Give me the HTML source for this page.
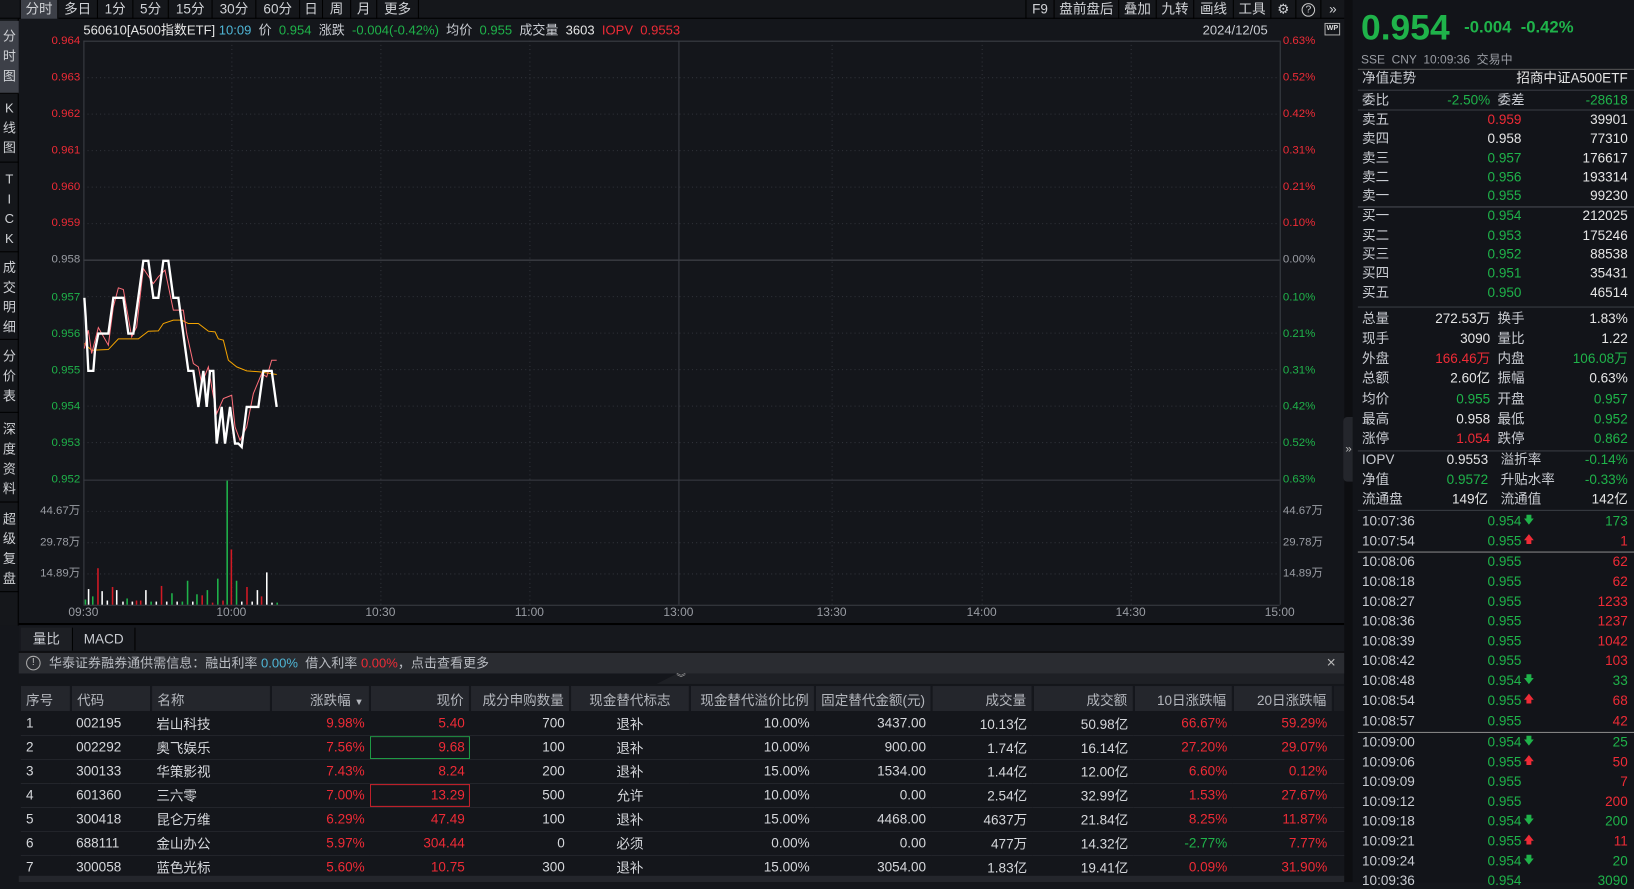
<!DOCTYPE html>
<html><head><meta charset="utf-8">
<style>
*{margin:0;padding:0;box-sizing:border-box}
html,body{width:1634px;height:882px;overflow:hidden;background:#14161b}
body{font-family:"Liberation Sans","Noto Sans CJK SC",sans-serif;color:#c9ccd2;font-size:13px}
#w{position:absolute;left:0;top:0;width:1568px;height:846px;transform:scale(1.0421,1.0426);transform-origin:0 0;background:#14161b}
.a{position:absolute;white-space:nowrap;line-height:16px}
.g{color:#1fb34a}.r{color:#ee2b36}.wh{color:#e6e6e6}.gy{color:#9a9da4}.cy{color:#4fb6d6}
.tb{position:absolute;top:0;height:18px;line-height:18px;text-align:center;font-size:13px;color:#d0d2d6;border-right:1px solid #000}
.vt{position:absolute;left:0;width:18px;text-align:center;font-size:12.5px;line-height:19px;color:#cfd1d5;border-bottom:1px solid #000}
.pl{position:absolute;right:1491px;font-size:11px;line-height:12px}
.pr{position:absolute;left:1231px;font-size:11px;line-height:12px}
.tx{position:absolute;top:582px;font-size:11.5px;color:#9a9da4;transform:translateX(-50%)}
#rp{position:absolute;left:1298px;top:0;width:270px;height:846px;background:#121419}
#rp .a{font-size:13px}
.hl{position:absolute;left:5px;right:0;height:1px;background:#3a3d44}
table{position:absolute;left:20px;top:658px;border-collapse:collapse;table-layout:fixed;font-size:13px}
td,th{height:23px;white-space:nowrap;overflow:hidden;padding:0 5px;text-align:right;font-weight:normal}
th{background:#24262c;color:#b4b7bd;border-right:2px solid #15171c;height:24px}
td{border-bottom:1px solid #23252b;color:#d5d7db}
.L{text-align:left}.C{text-align:center}
</style></head><body><div id="w">

<!-- top toolbar -->
<div style="position:absolute;left:0;top:0;width:1290px;height:18px;background:#15171b;border-bottom:1px solid #000"></div>
<div class="tb" style="left:0;width:20px"></div>
<div class="tb" style="left:20px;width:36px;background:#3d4048">分时</div>
<div class="tb" style="left:56px;width:38px">多日</div>
<div class="tb" style="left:94px;width:34px">1分</div>
<div class="tb" style="left:128px;width:34px">5分</div>
<div class="tb" style="left:162px;width:42px">15分</div>
<div class="tb" style="left:204px;width:42px">30分</div>
<div class="tb" style="left:246px;width:42px">60分</div>
<div class="tb" style="left:288px;width:22px">日</div>
<div class="tb" style="left:310px;width:27px">周</div>
<div class="tb" style="left:337px;width:25px">月</div>
<div class="tb" style="left:362px;width:40px">更多</div>
<div class="tb" style="left:984px;width:28px;border-left:1px solid #000">F9</div>
<div class="tb" style="left:1012px;width:62px">盘前盘后</div>
<div class="tb" style="left:1074px;width:36px">叠加</div>
<div class="tb" style="left:1110px;width:36px">九转</div>
<div class="tb" style="left:1146px;width:38px">画线</div>
<div class="tb" style="left:1184px;width:36px">工具</div>
<div class="tb" style="left:1220px;width:24px">⚙</div>
<div class="tb" style="left:1244px;width:24px"><span style="display:inline-block;width:13px;height:13px;border:1px solid #ccc;border-radius:50%;font-size:10px;line-height:11px;vertical-align:middle">?</span></div>
<div class="tb" style="left:1268px;width:22px;border-right:0">»</div>

<!-- left vertical tabs -->
<div style="position:absolute;left:0;top:18px;width:18px;height:582px;background:#15171b;border-right:1px solid #000"></div>
<div class="vt" style="top:20px;height:70px;background:#3d4048;padding-top:6px">分<br>时<br>图</div>
<div class="vt" style="top:90px;height:66px;padding-top:5px">K<br>线<br>图</div>
<div class="vt" style="top:156px;height:86px;padding-top:7px">T<br>I<br>C<br>K</div>
<div class="vt" style="top:242px;height:84px;padding-top:6px">成<br>交<br>明<br>细</div>
<div class="vt" style="top:326px;height:70px;padding-top:7px">分<br>价<br>表</div>
<div class="vt" style="top:396px;height:86px;padding-top:7px">深<br>度<br>资<br>料</div>
<div class="vt" style="top:482px;height:86px;padding-top:7px">超<br>级<br>复<br>盘</div>

<!-- info line -->
<div class="a" style="left:80px;top:21px;font-size:12.5px"><span class="wh">560610[A500指数ETF]</span> <span class="cy">10:09</span> &nbsp;价 &nbsp;<span class="g">0.954</span> &nbsp;涨跌 &nbsp;<span class="g">-0.004(-0.42%)</span> &nbsp;均价 &nbsp;<span class="g">0.955</span> &nbsp;成交量 &nbsp;<span class="wh">3603</span> &nbsp;<span class="r">IOPV &nbsp;0.9553</span></div>
<div class="a" style="left:1154px;top:21px;font-size:12.5px">2024/12/05</div>
<div style="position:absolute;left:1271px;top:22px;width:15px;height:12px;border:1px solid #aaa;font-size:7px;line-height:10px;text-align:center;color:#ddd;font-weight:bold">WP</div>

<!-- chart svg -->
<svg style="position:absolute;left:0;top:0" width="1290" height="600">
<g stroke="#30333a" stroke-dasharray="1,3" stroke-width="1">
<line x1="80" x2="1228" y1="74.5" y2="74.5"/><line x1="80" x2="1228" y1="109.5" y2="109.5"/><line x1="80" x2="1228" y1="144.5" y2="144.5"/><line x1="80" x2="1228" y1="179.5" y2="179.5"/><line x1="80" x2="1228" y1="214.5" y2="214.5"/>
<line x1="80" x2="1228" y1="284.5" y2="284.5"/><line x1="80" x2="1228" y1="319.5" y2="319.5"/><line x1="80" x2="1228" y1="354.5" y2="354.5"/><line x1="80" x2="1228" y1="389.5" y2="389.5"/><line x1="80" x2="1228" y1="424.5" y2="424.5"/>
<line x1="80" x2="1228" y1="490.5" y2="490.5"/><line x1="80" x2="1228" y1="520.5" y2="520.5"/><line x1="80" x2="1228" y1="550.5" y2="550.5"/>
<line x1="222.5" x2="222.5" y1="39" y2="580"/><line x1="365.5" x2="365.5" y1="39" y2="580"/><line x1="508.5" x2="508.5" y1="39" y2="580"/><line x1="798.5" x2="798.5" y1="39" y2="580"/><line x1="942.5" x2="942.5" y1="39" y2="580"/><line x1="1085.5" x2="1085.5" y1="39" y2="580"/>
</g>
<g stroke="#3b3e45" stroke-width="1" fill="none">
<line x1="80" x2="1228" y1="39.5" y2="39.5"/><line x1="80" x2="1228" y1="249.5" y2="249.5" stroke="#4a4d54"/><line x1="80" x2="1228" y1="460.5" y2="460.5"/><line x1="80" x2="1228" y1="580.5" y2="580.5"/>
<line x1="80.5" x2="80.5" y1="39" y2="580"/><line x1="651.5" x2="651.5" y1="39" y2="580"/><line x1="1228.5" x2="1228.5" y1="39" y2="580"/>
<line x1="18" x2="1290" y1="598.5" y2="598.5" stroke="#000" stroke-width="2"/>
</g>
<g stroke-width="1.5">
<line x1="82" x2="82" y1="580" y2="575" stroke="#1fb34a"/><line x1="85" x2="85" y1="580" y2="565" stroke="#fff"/><line x1="89" x2="89" y1="580" y2="572" stroke="#1fb34a"/><line x1="94" x2="94" y1="580" y2="545" stroke="#d21a24"/><line x1="98" x2="98" y1="580" y2="567" stroke="#fff"/><line x1="103" x2="103" y1="580" y2="576" stroke="#fff"/><line x1="108" x2="108" y1="580" y2="563" stroke="#d21a24"/><line x1="112" x2="112" y1="580" y2="566" stroke="#fff"/><line x1="118" x2="118" y1="580" y2="577" stroke="#fff"/><line x1="122" x2="122" y1="580" y2="574" stroke="#1fb34a"/><line x1="127" x2="127" y1="580" y2="577" stroke="#fff"/><line x1="131" x2="131" y1="580" y2="576" stroke="#d21a24"/><line x1="135" x2="135" y1="580" y2="576" stroke="#d21a24"/><line x1="140" x2="140" y1="580" y2="566" stroke="#fff"/><line x1="145" x2="145" y1="580" y2="577" stroke="#1fb34a"/><line x1="150" x2="150" y1="580" y2="577" stroke="#fff"/><line x1="155" x2="155" y1="580" y2="562" stroke="#d21a24"/><line x1="160" x2="160" y1="580" y2="577" stroke="#fff"/><line x1="165" x2="165" y1="580" y2="569" stroke="#1fb34a"/><line x1="170" x2="170" y1="580" y2="577" stroke="#fff"/><line x1="175" x2="175" y1="580" y2="577" stroke="#1fb34a"/><line x1="180" x2="180" y1="580" y2="557" stroke="#1fb34a"/><line x1="185" x2="185" y1="580" y2="577" stroke="#fff"/><line x1="189" x2="189" y1="580" y2="570" stroke="#1fb34a"/><line x1="194" x2="194" y1="580" y2="571" stroke="#d21a24"/><line x1="199" x2="199" y1="580" y2="566" stroke="#1fb34a"/><line x1="204" x2="204" y1="580" y2="578" stroke="#d21a24"/><line x1="209" x2="209" y1="580" y2="555" stroke="#1fb34a"/><line x1="214" x2="214" y1="580" y2="576" stroke="#d21a24"/><line x1="218" x2="218" y1="580" y2="461" stroke="#1fb34a"/><line x1="222" x2="222" y1="580" y2="527" stroke="#d21a24"/><line x1="227" x2="227" y1="580" y2="557" stroke="#1fb34a"/><line x1="232" x2="232" y1="580" y2="577" stroke="#fff"/><line x1="237" x2="237" y1="580" y2="563" stroke="#d21a24"/><line x1="242" x2="242" y1="580" y2="577" stroke="#fff"/><line x1="247" x2="247" y1="580" y2="566" stroke="#fff"/><line x1="251" x2="251" y1="580" y2="572" stroke="#d21a24"/><line x1="256" x2="256" y1="580" y2="549" stroke="#fff"/><line x1="261" x2="261" y1="580" y2="578" stroke="#fff"/><line x1="266" x2="266" y1="580" y2="578" stroke="#1fb34a"/>
</g>
<g transform="scale(0.9597) translate(70,240) scale(0.33333)" fill="none" stroke-linejoin="miter">
<polyline stroke="#f5a400" stroke-width="3" points="43,310 65,330 115,328 145,296 205,296 235,273 265,272 280,250 310,240 335,240 355,250 385,250 415,273 435,275 445,296 460,300 475,360 500,380 530,392 570,395 620,403"/>
<polyline stroke="#ff6f7a" stroke-width="3" points="43,325 55,270 65,340 85,262 115,315 130,200 145,143 160,148 185,290 200,260 220,85 250,130 265,110 285,90 310,210 340,210 350,280 370,370 385,380 395,430 415,380 425,440 440,520 460,475 485,465 495,560 510,600 530,560 550,460 575,400 590,410 605,360 620,360"/>
<polyline stroke="#ffffff" stroke-width="7" points="43,173 47,230 55,392 70,392 75,330 85,280 115,280 130,173 160,173 175,280 190,280 220,62 235,62 250,173 265,173 280,62 295,62 310,173 325,173 355,392 370,392 385,500 400,392 410,500 420,392 430,392 440,610 455,500 465,610 480,500 495,610 505,610 515,620 530,500 565,500 580,392 605,392 620,500"/>
</g>
</svg>

<!-- left price labels -->
<div class="pl r" style="top:33px">0.964</div><div class="pl r" style="top:68px">0.963</div><div class="pl r" style="top:103px">0.962</div><div class="pl r" style="top:138px">0.961</div><div class="pl r" style="top:173px">0.960</div><div class="pl r" style="top:208px">0.959</div>
<div class="pl gy" style="top:243px">0.958</div>
<div class="pl g" style="top:279px">0.957</div><div class="pl g" style="top:314px">0.956</div><div class="pl g" style="top:349px">0.955</div><div class="pl g" style="top:384px">0.954</div><div class="pl g" style="top:419px">0.953</div><div class="pl g" style="top:454px">0.952</div>
<div class="pl gy" style="top:484px">44.67万</div><div class="pl gy" style="top:514px">29.78万</div><div class="pl gy" style="top:544px">14.89万</div>
<!-- right pct labels -->
<div class="pr r" style="top:33px">0.63%</div><div class="pr r" style="top:68px">0.52%</div><div class="pr r" style="top:103px">0.42%</div><div class="pr r" style="top:138px">0.31%</div><div class="pr r" style="top:173px">0.21%</div><div class="pr r" style="top:208px">0.10%</div>
<div class="pr gy" style="top:243px">0.00%</div>
<div class="pr g" style="top:279px">0.10%</div><div class="pr g" style="top:314px">0.21%</div><div class="pr g" style="top:349px">0.31%</div><div class="pr g" style="top:384px">0.42%</div><div class="pr g" style="top:419px">0.52%</div><div class="pr g" style="top:454px">0.63%</div>
<div class="pr gy" style="top:484px">44.67万</div><div class="pr gy" style="top:514px">29.78万</div><div class="pr gy" style="top:544px">14.89万</div>
<!-- time axis -->
<div class="tx" style="left:80px">09:30</div><div class="tx" style="left:222px">10:00</div><div class="tx" style="left:365px">10:30</div><div class="tx" style="left:508px">11:00</div><div class="tx" style="left:651px">13:00</div><div class="tx" style="left:798px">13:30</div><div class="tx" style="left:942px">14:00</div><div class="tx" style="left:1085px">14:30</div><div class="tx" style="left:1228px">15:00</div>

<!-- indicator tabs -->
<div style="position:absolute;left:18px;top:600px;width:1272px;height:26px;background:#16181d;border-bottom:1px solid #000"></div>
<div class="a" style="left:20px;top:602px;width:50px;height:22px;line-height:22px;text-align:center;background:#1d1f24;border-right:1px solid #000">量比</div>
<div class="a" style="left:70px;top:602px;width:60px;height:22px;line-height:22px;text-align:center;border-right:1px solid #000">MACD</div>
<!-- notice -->
<div style="position:absolute;left:18px;top:626px;width:1272px;height:20px;background:#2a2c31"></div>
<div style="position:absolute;left:25px;top:629px;width:14px;height:14px;border:1px solid #aaa;border-radius:50%;font-size:10px;line-height:12px;text-align:center;color:#bbb">!</div>
<div class="a" style="left:47px;top:628px;color:#b9bcc2;font-size:12.5px">华泰证券融券通供需信息：融出利率 <span class="cy">0.00%</span> &nbsp;借入利率 <span class="r">0.00%</span>，点击查看更多</div>
<div class="a" style="left:1273px;top:628px;color:#bbb;font-size:15px">×</div>
<div style="position:absolute;left:18px;top:646px;width:1272px;height:11px;background:#14161b"></div>
<div style="position:absolute;left:630px;top:646px;width:660px;height:10px;background:#1e2025;clip-path:polygon(3% 0,100% 0,100% 100%,0 100%)"></div>
<div class="a" style="left:649px;top:642px;font-size:9px;color:#aaa">︾</div>

<!-- table -->
<table>
<colgroup><col style="width:48px"><col style="width:77px"><col style="width:115px"><col style="width:95px"><col style="width:96px"><col style="width:96px"><col style="width:115px"><col style="width:120px"><col style="width:111px"><col style="width:97px"><col style="width:97px"><col style="width:95px"><col style="width:96px"><col style="width:10px"></colgroup>
<tr><th class="L">序号</th><th class="L">代码</th><th class="L">名称</th><th>涨跌幅 <span style="font-size:9px">▼</span></th><th>现价</th><th>成分申购数量</th><th class="C">现金替代标志</th><th>现金替代溢价比例</th><th>固定替代金额(元)</th><th>成交量</th><th>成交额</th><th>10日涨跌幅</th><th>20日涨跌幅</th><th style="background:#1b1d22"></th></tr>
<tr><td class="L">1</td><td class="L">002195</td><td class="L">岩山科技</td><td class="r">9.98%</td><td class="r">5.40</td><td>700</td><td class="C">退补</td><td>10.00%</td><td>3437.00</td><td>10.13亿</td><td>50.98亿</td><td class="r">66.67%</td><td class="r">59.29%</td><td></td></tr>
<tr><td class="L">2</td><td class="L">002292</td><td class="L">奥飞娱乐</td><td class="r">7.56%</td><td class="r" style="box-shadow:inset 0 0 0 1px #1f9a45">9.68</td><td>100</td><td class="C">退补</td><td>10.00%</td><td>900.00</td><td>1.74亿</td><td>16.14亿</td><td class="r">27.20%</td><td class="r">29.07%</td><td></td></tr>
<tr><td class="L">3</td><td class="L">300133</td><td class="L">华策影视</td><td class="r">7.43%</td><td class="r">8.24</td><td>200</td><td class="C">退补</td><td>15.00%</td><td>1534.00</td><td>1.44亿</td><td>12.00亿</td><td class="r">6.60%</td><td class="r">0.12%</td><td></td></tr>
<tr><td class="L">4</td><td class="L">601360</td><td class="L">三六零</td><td class="r">7.00%</td><td class="r" style="box-shadow:inset 0 0 0 1px #c0202a">13.29</td><td>500</td><td class="C">允许</td><td>10.00%</td><td>0.00</td><td>2.54亿</td><td>32.99亿</td><td class="r">1.53%</td><td class="r">27.67%</td><td></td></tr>
<tr><td class="L">5</td><td class="L">300418</td><td class="L">昆仑万维</td><td class="r">6.29%</td><td class="r">47.49</td><td>100</td><td class="C">退补</td><td>15.00%</td><td>4468.00</td><td>4637万</td><td>21.84亿</td><td class="r">8.25%</td><td class="r">11.87%</td><td></td></tr>
<tr><td class="L">6</td><td class="L">688111</td><td class="L">金山办公</td><td class="r">5.97%</td><td class="r">304.44</td><td>0</td><td class="C">必须</td><td>0.00%</td><td>0.00</td><td>477万</td><td>14.32亿</td><td class="g">-2.77%</td><td class="r">7.77%</td><td></td></tr>
<tr><td class="L">7</td><td class="L">300058</td><td class="L">蓝色光标</td><td class="r">5.60%</td><td class="r">10.75</td><td>300</td><td class="C">退补</td><td>15.00%</td><td>3054.00</td><td>1.83亿</td><td>19.41亿</td><td class="r">0.09%</td><td class="r">31.90%</td><td></td></tr>
</table>
<div style="position:absolute;left:18px;top:840px;width:1272px;height:6px;background:#24262c"></div>

<!-- splitter -->
<div style="position:absolute;left:1290px;top:0;width:8px;height:846px;background:#0d0e11"></div>
<div style="position:absolute;left:1289px;top:400px;width:10px;height:62px;background:#24262c;border-radius:4px 0 0 4px"></div>
<div class="a" style="left:1291px;top:423px;font-size:11px;color:#bbb">»</div>

<!-- right panel -->
<div id="rp">
<div class="a g" style="left:8px;top:8px;font-size:34px;line-height:38px;font-weight:bold">0.954</div>
<div class="a g" style="left:107px;top:18px;font-size:16px;line-height:18px;font-weight:bold">-0.004 &nbsp;-0.42%</div>
<div class="a gy" style="left:8px;top:51px;font-size:11.5px;line-height:14px">SSE &nbsp;CNY &nbsp;10:09:36 &nbsp;交易中</div>
<div class="hl" style="top:66px;background:#555"></div>
<div class="a" style="left:9px;top:67px">净值走势</div><div class="a wh" style="right:6px;top:67px">招商中证A500ETF</div>
<div class="hl" style="top:86px"></div>
<div class="a" style="left:9px;top:88px">委比</div><div class="a g" style="right:138px;top:88px">-2.50%</div><div class="a" style="left:139px;top:88px">委差</div><div class="a g" style="right:6px;top:88px">-28618</div>
<div class="hl" style="top:105px"></div>
<div class="a" style="left:9px;top:107px">卖五</div><div class="a r" style="right:108px;top:107px">0.959</div><div class="a wh" style="right:6px;top:107px">39901</div>
<div class="a" style="left:9px;top:125px">卖四</div><div class="a wh" style="right:108px;top:125px">0.958</div><div class="a wh" style="right:6px;top:125px">77310</div>
<div class="a" style="left:9px;top:144px">卖三</div><div class="a g" style="right:108px;top:144px">0.957</div><div class="a wh" style="right:6px;top:144px">176617</div>
<div class="a" style="left:9px;top:162px">卖二</div><div class="a g" style="right:108px;top:162px">0.956</div><div class="a wh" style="right:6px;top:162px">193314</div>
<div class="a" style="left:9px;top:180px">卖一</div><div class="a g" style="right:108px;top:180px">0.955</div><div class="a wh" style="right:6px;top:180px">99230</div>
<div class="hl" style="top:198px;background:#4a4d54"></div>
<div class="a" style="left:9px;top:199px">买一</div><div class="a g" style="right:108px;top:199px">0.954</div><div class="a wh" style="right:6px;top:199px">212025</div>
<div class="a" style="left:9px;top:218px">买二</div><div class="a g" style="right:108px;top:218px">0.953</div><div class="a wh" style="right:6px;top:218px">175246</div>
<div class="a" style="left:9px;top:236px">买三</div><div class="a g" style="right:108px;top:236px">0.952</div><div class="a wh" style="right:6px;top:236px">88538</div>
<div class="a" style="left:9px;top:254px">买四</div><div class="a g" style="right:108px;top:254px">0.951</div><div class="a wh" style="right:6px;top:254px">35431</div>
<div class="a" style="left:9px;top:273px">买五</div><div class="a g" style="right:108px;top:273px">0.950</div><div class="a wh" style="right:6px;top:273px">46514</div>
<div class="hl" style="top:294px"></div>
<div class="a" style="left:9px;top:298px">总量</div><div class="a wh" style="right:138px;top:298px">272.53万</div><div class="a" style="left:139px;top:298px">换手</div><div class="a wh" style="right:6px;top:298px">1.83%</div>
<div class="a" style="left:9px;top:317px">现手</div><div class="a wh" style="right:138px;top:317px">3090</div><div class="a" style="left:139px;top:317px">量比</div><div class="a wh" style="right:6px;top:317px">1.22</div>
<div class="a" style="left:9px;top:336px">外盘</div><div class="a r" style="right:138px;top:336px">166.46万</div><div class="a" style="left:139px;top:336px">内盘</div><div class="a g" style="right:6px;top:336px">106.08万</div>
<div class="a" style="left:9px;top:355px">总额</div><div class="a wh" style="right:138px;top:355px">2.60亿</div><div class="a" style="left:139px;top:355px">振幅</div><div class="a wh" style="right:6px;top:355px">0.63%</div>
<div class="a" style="left:9px;top:375px">均价</div><div class="a g" style="right:138px;top:375px">0.955</div><div class="a" style="left:139px;top:375px">开盘</div><div class="a g" style="right:6px;top:375px">0.957</div>
<div class="a" style="left:9px;top:394px">最高</div><div class="a wh" style="right:138px;top:394px">0.958</div><div class="a" style="left:139px;top:394px">最低</div><div class="a g" style="right:6px;top:394px">0.952</div>
<div class="a" style="left:9px;top:413px">涨停</div><div class="a r" style="right:138px;top:413px">1.054</div><div class="a" style="left:139px;top:413px">跌停</div><div class="a g" style="right:6px;top:413px">0.862</div>
<div class="hl" style="top:432px"></div>
<div class="a" style="left:9px;top:433px">IOPV</div><div class="a wh" style="right:140px;top:433px">0.9553</div><div class="a" style="left:142px;top:433px">溢折率</div><div class="a g" style="right:6px;top:433px">-0.14%</div>
<div class="a" style="left:9px;top:452px">净值</div><div class="a g" style="right:140px;top:452px">0.9572</div><div class="a" style="left:142px;top:452px">升贴水率</div><div class="a g" style="right:6px;top:452px">-0.33%</div>
<div class="a" style="left:9px;top:471px">流通盘</div><div class="a wh" style="right:140px;top:471px">149亿</div><div class="a" style="left:142px;top:471px">流通值</div><div class="a wh" style="right:6px;top:471px">142亿</div>
<div class="hl" style="top:489px"></div>
<div class="a" style="left:9px;top:492px">10:07:36</div><div class="a g" style="right:108px;top:492px">0.954</div><div class="a g" style="left:164px;top:492px;font-size:10px">🡇</div><div class="a g" style="right:6px;top:492px">173</div>
<div class="a" style="left:9px;top:511px">10:07:54</div><div class="a g" style="right:108px;top:511px">0.955</div><div class="a r" style="left:164px;top:511px;font-size:10px">🡅</div><div class="a r" style="right:6px;top:511px">1</div>
<div class="hl" style="top:529px;background:#888"></div>
<div class="a" style="left:9px;top:531px">10:08:06</div><div class="a g" style="right:108px;top:531px">0.955</div><div class="a r" style="right:6px;top:531px">62</div>
<div class="a" style="left:9px;top:550px">10:08:18</div><div class="a g" style="right:108px;top:550px">0.955</div><div class="a r" style="right:6px;top:550px">62</div>
<div class="a" style="left:9px;top:569px">10:08:27</div><div class="a g" style="right:108px;top:569px">0.955</div><div class="a r" style="right:6px;top:569px">1233</div>
<div class="a" style="left:9px;top:588px">10:08:36</div><div class="a g" style="right:108px;top:588px">0.955</div><div class="a r" style="right:6px;top:588px">1237</div>
<div class="a" style="left:9px;top:607px">10:08:39</div><div class="a g" style="right:108px;top:607px">0.955</div><div class="a r" style="right:6px;top:607px">1042</div>
<div class="a" style="left:9px;top:626px">10:08:42</div><div class="a g" style="right:108px;top:626px">0.955</div><div class="a r" style="right:6px;top:626px">103</div>
<div class="a" style="left:9px;top:645px">10:08:48</div><div class="a g" style="right:108px;top:645px">0.954</div><div class="a g" style="left:164px;top:645px;font-size:10px">🡇</div><div class="a g" style="right:6px;top:645px">33</div>
<div class="a" style="left:9px;top:664px">10:08:54</div><div class="a g" style="right:108px;top:664px">0.955</div><div class="a r" style="left:164px;top:664px;font-size:10px">🡅</div><div class="a r" style="right:6px;top:664px">68</div>
<div class="a" style="left:9px;top:684px">10:08:57</div><div class="a g" style="right:108px;top:684px">0.955</div><div class="a r" style="right:6px;top:684px">42</div>
<div class="hl" style="top:702px;background:#888"></div>
<div class="a" style="left:9px;top:704px">10:09:00</div><div class="a g" style="right:108px;top:704px">0.954</div><div class="a g" style="left:164px;top:704px;font-size:10px">🡇</div><div class="a g" style="right:6px;top:704px">25</div>
<div class="a" style="left:9px;top:723px">10:09:06</div><div class="a g" style="right:108px;top:723px">0.955</div><div class="a r" style="left:164px;top:723px;font-size:10px">🡅</div><div class="a r" style="right:6px;top:723px">50</div>
<div class="a" style="left:9px;top:742px">10:09:09</div><div class="a g" style="right:108px;top:742px">0.955</div><div class="a r" style="right:6px;top:742px">7</div>
<div class="a" style="left:9px;top:761px">10:09:12</div><div class="a g" style="right:108px;top:761px">0.955</div><div class="a r" style="right:6px;top:761px">200</div>
<div class="a" style="left:9px;top:780px">10:09:18</div><div class="a g" style="right:108px;top:780px">0.954</div><div class="a g" style="left:164px;top:780px;font-size:10px">🡇</div><div class="a g" style="right:6px;top:780px">200</div>
<div class="a" style="left:9px;top:799px">10:09:21</div><div class="a g" style="right:108px;top:799px">0.955</div><div class="a r" style="left:164px;top:799px;font-size:10px">🡅</div><div class="a r" style="right:6px;top:799px">11</div>
<div class="a" style="left:9px;top:818px">10:09:24</div><div class="a g" style="right:108px;top:818px">0.954</div><div class="a g" style="left:164px;top:818px;font-size:10px">🡇</div><div class="a g" style="right:6px;top:818px">20</div>
<div class="a" style="left:9px;top:837px">10:09:36</div><div class="a g" style="right:108px;top:837px">0.954</div><div class="a g" style="right:6px;top:837px">3090</div>
</div>

</div></body></html>
